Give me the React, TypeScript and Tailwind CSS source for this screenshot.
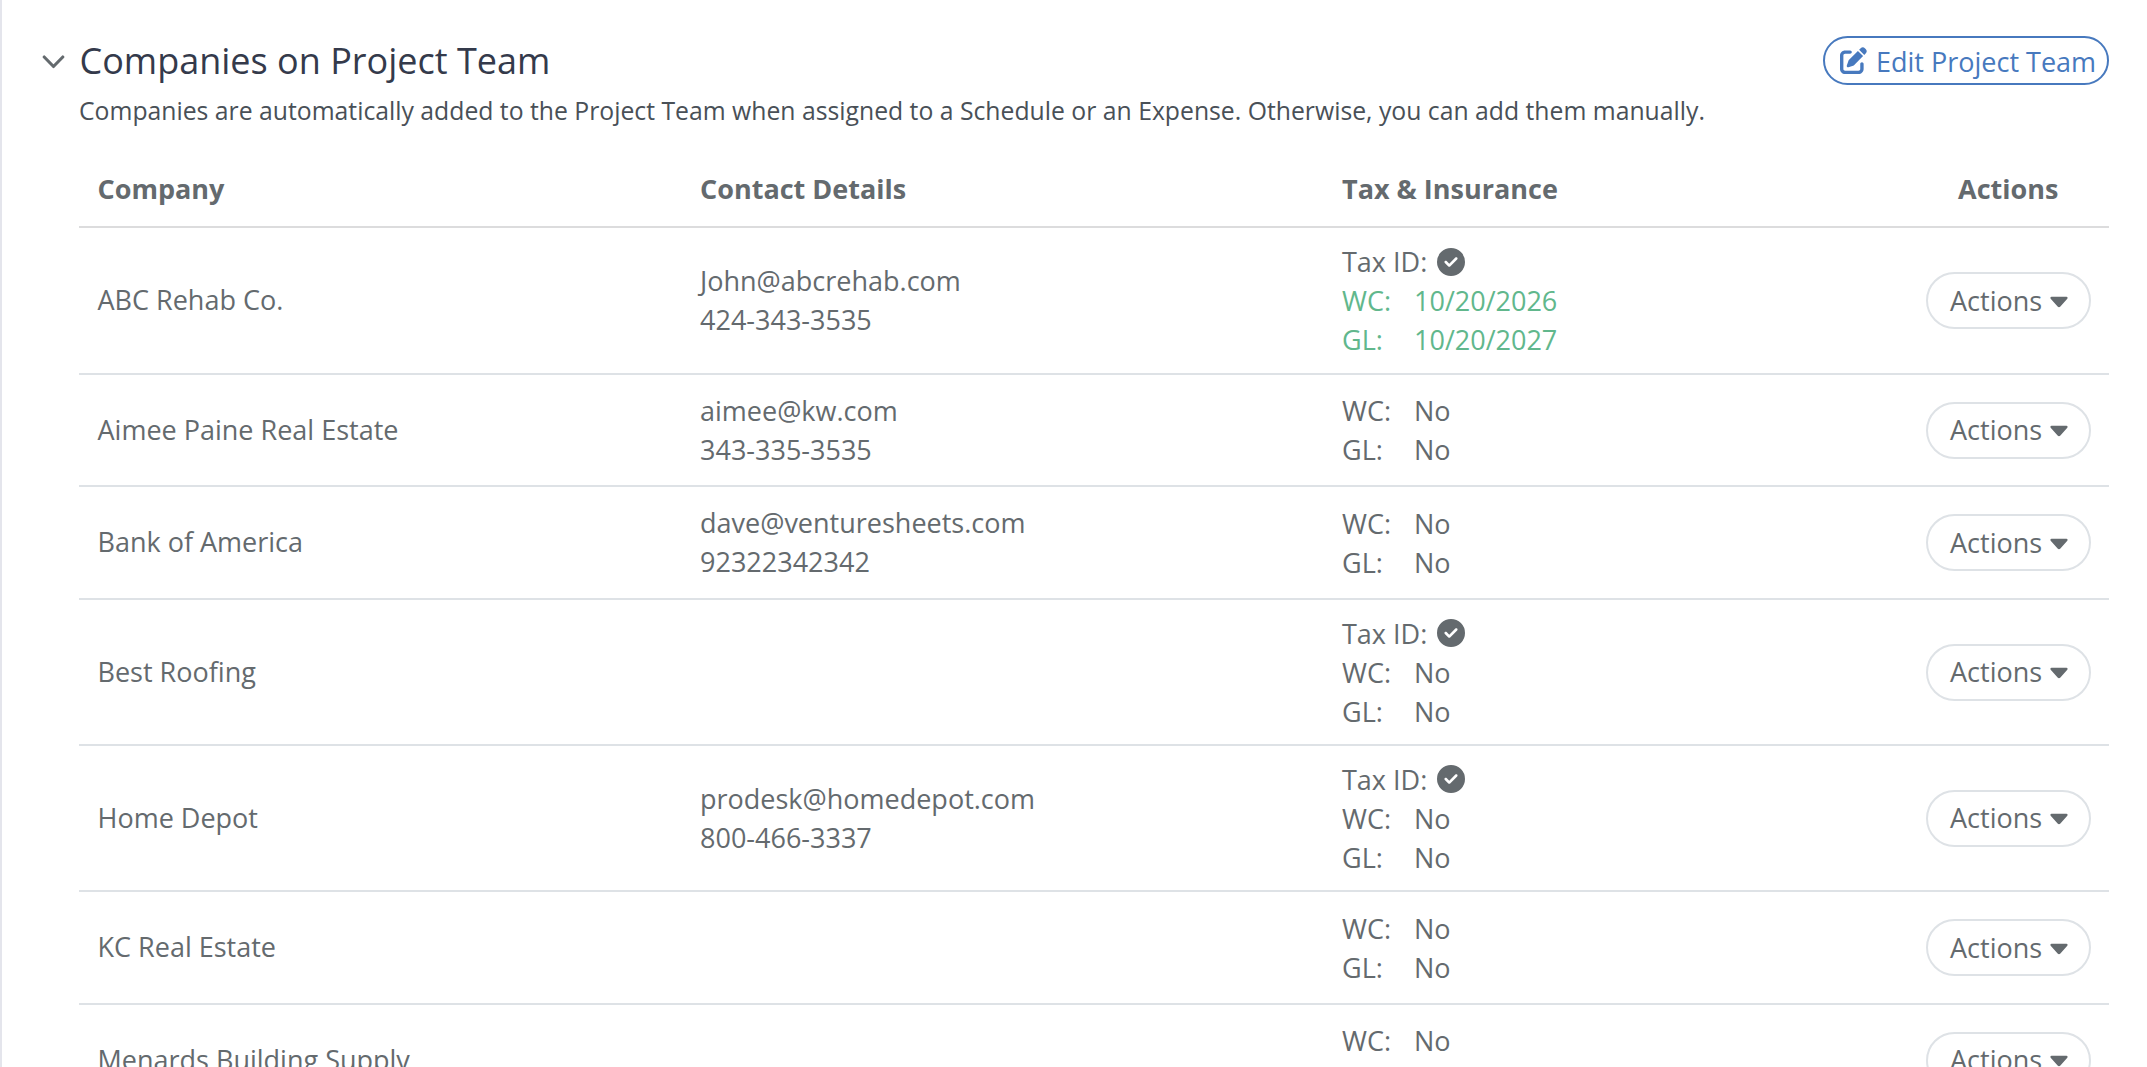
import { FaCircleCheck, FaPenToSquare } from "react-icons/fa6";

type Row = { name: string; email?: string; phone?: string; taxId?: boolean; wc: string; gl: string; valid?: boolean; h: string };

const rows: Row[] = [
  { name: "ABC Rehab Co.", email: "John@abcrehab.com", phone: "424-343-3535", taxId: true, wc: "10/20/2026", gl: "10/20/2027", valid: true, h: "h-[147px]" },
  { name: "Aimee Paine Real Estate", email: "aimee@kw.com", phone: "343-335-3535", wc: "No", gl: "No", h: "h-[112px]" },
  { name: "Bank of America", email: "dave@venturesheets.com", phone: "92322342342", wc: "No", gl: "No", h: "h-[113px]" },
  { name: "Best Roofing", taxId: true, wc: "No", gl: "No", h: "h-[146px]" },
  { name: "Home Depot", email: "prodesk@homedepot.com", phone: "800-466-3337", taxId: true, wc: "No", gl: "No", h: "h-[146px]" },
  { name: "KC Real Estate", wc: "No", gl: "No", h: "h-[113px]" },
  { name: "Menards Building Supply", wc: "No", gl: "No", h: "h-[112px]" },
];

const COLS = "grid grid-cols-[602.5px_642px_562px_1fr] items-center pl-[18.5px] pr-[18px]";

export default function App() {
  return (
    <div className="h-[1067px] overflow-hidden border-l-2 border-[#e4e5ec] bg-white pl-[77px] pr-[38px] font-['Open_Sans',sans-serif] text-[27px] leading-[39px] text-[#646a6e]">
      <header className="flex h-[84px] items-start justify-between pt-[36px]">
        <div className="-ml-[37px] flex items-center pt-px">
          <svg className="mr-[14.500px] mt-[1px] h-[14px] w-[23px]" viewBox="0 0 23 14" fill="none" stroke="#646a6e" strokeWidth="3.1" strokeLinecap="round" strokeLinejoin="round"><path d="M2.200 2l9.300 9.500L20.800 2" /></svg>
          <h1 className="text-[36px] leading-[48px] text-[#343a4b]">Companies on Project Team</h1>
        </div>
        <button className="flex h-[49px] w-[286px] items-center rounded-full border-2 border-[#4779be] pl-[15px] text-[#4779be]">
          <FaPenToSquare className="mr-[9px] size-[27px]" /><span className="pt-px">Edit Project Team</span>
        </button>
      </header>
      <p className="h-[72px] pt-[8px] text-[24.76px] leading-[37px] text-[#495057]">Companies are automatically added to the Project Team when assigned to a Schedule or an Expense. Otherwise, you can add them manually.</p>
      <div className={`${COLS} h-[72px] border-b-2 border-[#dcdcdd] pb-[5px] font-bold`}>
        <span>Company</span><span>Contact Details</span><span>Tax &amp; Insurance</span><span className="pl-[54px]">Actions</span>
      </div>
      {rows.map((r) => (
        <div key={r.name} className={`${COLS} ${r.h} border-b-2 border-[#dee2e6]`}>
          <span className="pb-[2px]">{r.name}</span>
          <div className="pb-px"><div>{r.email}</div><div>{r.phone}</div></div>
          <div>
            {r.taxId && <div className="flex items-center">Tax ID:<FaCircleCheck className="ml-[10px] size-[28px]" /></div>}
            <div className={r.valid ? "text-[#61b78c]" : ""}>
              <div className="flex"><span className="w-[72px]">WC:</span>{r.wc}</div>
              <div className="flex"><span className="w-[72px]">GL:</span>{r.gl}</div>
            </div>
          </div>
          <button className="flex h-[57px] w-[165px] items-center justify-self-end rounded-full border-2 border-[#dee2e6] pb-px pl-[22px]">
            Actions
            <svg className="ml-[8px] mt-[3px] h-[12px] w-[18px]" viewBox="0 0 18 12" fill="currentColor"><path d="M1.5.8h15c1 0 1.5 1.2.8 1.9L10.4 10.5a2 2 0 0 1-2.8 0L.7 2.7C0 2 .5.8 1.5.8z" /></svg>
          </button>
        </div>
      ))}
    </div>
  );
}
